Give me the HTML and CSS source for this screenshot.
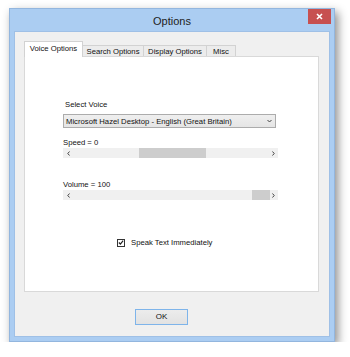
FILE: index.html
```html
<!DOCTYPE html>
<html>
	<head>
		<meta charset="UTF-8">
		<title>Options</title>
		<link rel="stylesheet" href="styles.css">
	</head>
	<body>
		<div class="window">
			<div class="titlebar">
				<span class="title">Options</span>
				<div class="close">
					<svg width="7" height="7" viewBox="0 0 7 7"><path d="M1 1L6 6M6 1L1 6" stroke="#fff" stroke-width="1.6"/></svg>
				</div>
			</div>
			<div class="content">
				<ul class="tabs">
					<li class="tab active voice">Voice Options</li>
					<li class="tab search">Search Options</li>
					<li class="tab display">Display Options</li>
					<li class="tab misc">Misc</li>
				</ul>
				<div class="panel">
					<div class="label first">Select Voice</div>
					<div class="combo">
						<span>Microsoft Hazel Desktop - English (Great Britain)</span>
						<svg width="5" height="4" viewBox="0 0 5 4"><path d="M0.5 1L2.5 3L4.5 1" stroke="#444" fill="none" stroke-width="1"/></svg>
					</div>
					<div class="label speed">Speed = 0</div>
					<div class="scroll">
						<svg class="arrow" width="3" height="5" viewBox="0 0 3 5"><path d="M2.5 0.5L0.8 2.5L2.5 4.5" stroke="#444" fill="none" stroke-width="1"/></svg>
						<div class="track"><div class="thumb" style="margin-left:67px;width:67px"></div></div>
						<svg class="arrow" width="3" height="5" viewBox="0 0 3 5"><path d="M0.5 0.5L2.2 2.5L0.5 4.5" stroke="#444" fill="none" stroke-width="1"/></svg>
					</div>
					<div class="label volume">Volume = 100</div>
					<div class="scroll">
						<svg class="arrow" width="3" height="5" viewBox="0 0 3 5"><path d="M2.5 0.5L0.8 2.5L2.5 4.5" stroke="#444" fill="none" stroke-width="1"/></svg>
						<div class="track"><div class="thumb" style="margin-left:180px;width:18px"></div></div>
						<svg class="arrow" width="3" height="5" viewBox="0 0 3 5"><path d="M0.5 0.5L2.2 2.5L0.5 4.5" stroke="#444" fill="none" stroke-width="1"/></svg>
					</div>
					<div class="check">
						<div class="box">
							<svg width="7" height="7" viewBox="0 0 7 7"><path d="M1 3.5L2.8 5.3L6 1.2" stroke="#222" fill="none" stroke-width="1.4"/></svg>
						</div>
						<span>Speak Text Immediately</span>
					</div>
				</div>
				<div class="buttons">
					<div class="ok">OK</div>
				</div>
			</div>
		</div>
	</body>
</html>
```

FILE: styles.css
```css
body, ul{margin:0; padding:0;}
ul{list-style:none;}
body{
	background:#fff;
	font-family:"Liberation Sans", Arial, sans-serif;
	font-size:7.7px;
	color:#111;
}
.window{
	width:326px;
	height:334px;
	margin:8px 0 0 9px;
	box-sizing:border-box;
	background:#abcdf2;
	border:1px solid #93b6de;
	box-shadow:3px 4px 9px rgba(0,0,0,0.45);
	padding:0 4px 4px 4px;
}
.titlebar{
	position:relative;
	height:22px;
	display:flex;
	align-items:center;
	justify-content:center;
}
.title{
	font-size:11px;
	color:#222;
	padding-top:2px;
}
.close{
	position:absolute;
	right:-1px;
	top:0;
	width:23px;
	height:15px;
	background:#c75050;
	display:flex;
	align-items:center;
	justify-content:center;
}
.content{
	height:306px;
	box-sizing:border-box;
	background:#f0f0f0;
	border:1px solid #9fc0e6;
	padding:8px 10px 0 9px;
}
.tabs{
	display:flex;
	align-items:flex-end;
	height:16px;
}
.tab{
	height:11px;
	line-height:11px;
	box-sizing:border-box;
	border:1px solid #d2d2d2;
	border-bottom:none;
	border-left:none;
	background:#ececec;
	text-align:center;
}
.tab.active{
	position:relative;
	z-index:1;
	height:16px;
	line-height:13px;
	margin-bottom:-1px;
	background:#fff;
	border-left:1px solid #d2d2d2;
	width:59px;
}
.search{width:61px;}
.display{width:63px;}
.misc{width:29px;}
.panel{
	height:236px;
	box-sizing:border-box;
	background:#fff;
	border:1px solid #d9d9d9;
	padding:0 0 0 38px;
}
.label{
	height:9px;
	line-height:9px;
}
.label.first{margin-top:43px; padding-left:2px; height:14px;}
.label.speed{margin-top:10px;}
.label.volume{margin-top:22px;}
.combo{
	width:213px;
	height:14px;
	box-sizing:border-box;
	border:1px solid #acacac;
	background:linear-gradient(#efefef,#e5e5e5);
	display:flex;
	align-items:center;
	justify-content:space-between;
	padding:0 3px 0 2px;
}
.scroll{
	width:215px;
	height:10px;
	margin-top:1px;
	background:#f0f0f0;
	display:flex;
	align-items:center;
	padding:0 3px 0 4px;
	box-sizing:border-box;
}
.arrow{
	flex-shrink:0;
}
.track{
	flex:1;
	min-width:0;
	height:10px;
	padding:0 2px;
}
.thumb{
	height:10px;
	background:#cdcdcd;
}
.check{
	display:flex;
	align-items:center;
	margin:38px 0 0 54px;
}
.box{
	width:8px;
	height:8px;
	box-sizing:border-box;
	border:1px solid #333;
	background:#fff;
	display:flex;
	align-items:center;
	justify-content:center;
	margin-right:6px;
}
.buttons{
	padding:17px 0 0 111px;
}
.ok{
	width:53px;
	height:16px;
	box-sizing:border-box;
	border:1px solid #7eb4ea;
	background:linear-gradient(#ececec,#e2e2e2);
	text-align:center;
	line-height:14px;
	font-size:8px;
}
```
